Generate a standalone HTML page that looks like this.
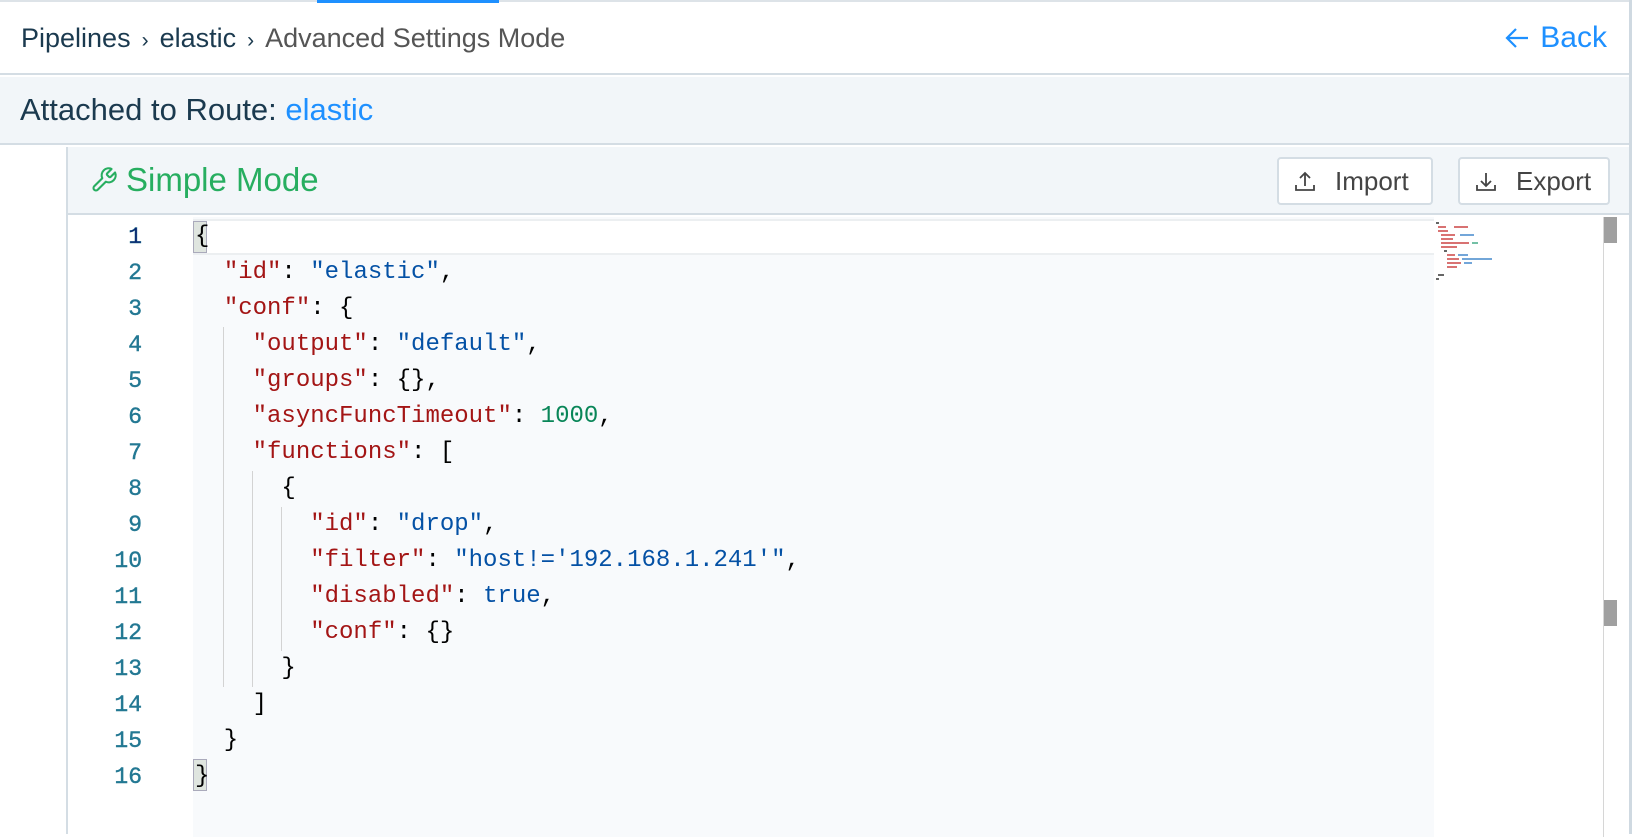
<!DOCTYPE html>
<html><head><meta charset="utf-8"><style>
*{margin:0;padding:0;box-sizing:border-box}
body{width:1632px;height:834px;overflow:hidden;background:#fff;font-family:"Liberation Sans",sans-serif;position:relative}
.topline{position:absolute;left:0;top:0;width:1632px;height:2px;background:#dde3e8}
.tab{position:absolute;left:317px;top:0;width:182px;height:3px;background:#1e90ff}
.rb{position:absolute;left:1629px;top:0;width:3px;height:834px;background:#cfd9e1}
.hdr{position:absolute;left:0;top:2px;width:1629px;height:73px;border-bottom:2px solid #d4dde4}
.crumb{position:absolute;left:21px;top:21px;font-size:27px;color:#1b3a4f}
.crumb .s{margin:0 11px;font-size:21px}
.crumb .g{color:#555}
.back{position:absolute;right:22px;top:19px;font-size:30px;color:#1e90ff;display:flex;align-items:center}
.bar{position:absolute;left:0;top:77px;width:1629px;height:68px;background:#f2f6f9;border-bottom:2px solid #d4dde4}
.bar span{position:absolute;left:20px;top:15px;font-size:31px;color:#1b3a4f}
.bar b{font-weight:normal;color:#1e90ff}
.panel{position:absolute;left:66px;top:147px;width:1563px;height:687px;border-left:2px solid #d4dde4}
.ph{position:absolute;left:0;top:0;width:100%;height:68px;background:#f2f6f9;border-bottom:2px solid #d4dde4}
.sm{position:absolute;left:22px;top:14px;font-size:33px;color:#27ae60;display:flex;align-items:center}
.btn{position:absolute;top:10px;height:48px;border:2px solid #d4dde4;border-radius:4px;background:#fff;font-size:26px;color:#444;display:flex;align-items:center;padding-left:14px}
.ed{position:absolute;left:0;top:70px;width:100%;height:620px}
.code{position:absolute;left:125px;top:0;width:1241px;height:100%;background:#f8fafc}
.ln{position:absolute;left:0;width:74px;text-align:right;font-family:"Liberation Mono",monospace;font-size:23px;color:#237893;line-height:36px;-webkit-text-stroke:0.4px #237893}
.l{position:absolute;left:127px;font-family:"Liberation Mono",monospace;font-size:24px;line-height:36px;white-space:pre;color:#000}
.k{color:#a31515}.v{color:#0451a5}.n{color:#098658}
.guide{position:absolute;width:1px;background:#d3d3d3}
</style></head><body>
<div class="topline"></div><div class="tab"></div>
<div class="hdr">
<div class="crumb">Pipelines<span class="s">›</span>elastic<span class="s">›</span><span class="g">Advanced Settings Mode</span></div>
<div class="back"><svg width="26" height="24" viewBox="0 0 26 24" style="margin-right:10px"><path d="M24 12H3M12 3L3 12L12 21" fill="none" stroke="#1e90ff" stroke-width="2.2"/></svg>Back</div>
</div>
<div class="bar"><span>Attached to Route: <b>elastic</b></span></div>
<div class="rb"></div>
<div class="panel">
<div class="ph">
<div class="sm"><svg width="28" height="28" viewBox="0 0 24 24" style="margin-right:8px"><path d="M14.7 6.3a1 1 0 0 0 0 1.4l1.6 1.6a1 1 0 0 0 1.4 0l3.77-3.77a6 6 0 0 1-7.94 7.94l-6.91 6.91a2.12 2.12 0 0 1-3-3l6.910-6.91a6 6 0 0 1 7.94-7.94l-3.76 3.76z" fill="none" stroke="#27ae60" stroke-width="1.8" stroke-linejoin="round"/></svg>Simple Mode</div>
<div class="btn" style="left:1209px;width:156px"><svg width="24" height="24" viewBox="0 0 24 24" style="margin-right:18px"><path d="M12 17V4M7 9l5-5 5 5M3 16v5h18v-5" fill="none" stroke="#444" stroke-width="1.8"/></svg>Import</div>
<div class="btn" style="left:1390px;width:152px"><svg width="24" height="24" viewBox="0 0 24 24" style="margin-right:18px"><path d="M12 4v13M7 12l5 5 5-5M3 16v5h18v-5" fill="none" stroke="#444" stroke-width="1.8"/></svg>Export</div>
</div>
<div class="ed">
<div class="code"></div>
<div style="position:absolute;left:125px;top:2px;width:1241px;height:36px;background:#fff;border-bottom:2px solid #eceff1;border-top:2px solid #eceff1"></div>
<div style="position:absolute;left:125px;top:4px;width:14px;height:32px;background:#dfe5df;border:1px solid #aab"></div>
<div style="position:absolute;left:125px;top:542px;width:14px;height:32px;background:#dfe5df;border:1px solid #aab"></div>
<div class="guide" style="left:155px;top:110px;height:360px"></div>
<div class="guide" style="left:184px;top:254px;height:216px"></div>
<div class="guide" style="left:213px;top:290px;height:144px"></div>
<div style="position:absolute;left:1535px;top:0;width:1px;height:620px;background:#d6d6d6"></div>
<div style="position:absolute;left:1536px;top:0;width:13px;height:26px;background:#a0a0a0"></div>
<div style="position:absolute;left:1536px;top:383px;width:13px;height:26px;background:#a0a0a0"></div>
<div class="ln" style="top:2px;color:#0b216f">1</div>
<div class="ln" style="top:38px">2</div><div class="ln" style="top:74px">3</div><div class="ln" style="top:110px">4</div><div class="ln" style="top:146px">5</div><div class="ln" style="top:182px">6</div><div class="ln" style="top:218px">7</div><div class="ln" style="top:254px">8</div><div class="ln" style="top:290px">9</div><div class="ln" style="top:326px">10</div><div class="ln" style="top:362px">11</div><div class="ln" style="top:398px">12</div><div class="ln" style="top:434px">13</div><div class="ln" style="top:470px">14</div><div class="ln" style="top:506px">15</div><div class="ln" style="top:542px">16</div>
<div class="l" style="top:2px">{</div>
<div class="l" style="top:38px">  <span class="k">"id"</span>: <span class="v">"elastic"</span>,</div>
<div class="l" style="top:74px">  <span class="k">"conf"</span>: {</div>
<div class="l" style="top:110px">    <span class="k">"output"</span>: <span class="v">"default"</span>,</div>
<div class="l" style="top:146px">    <span class="k">"groups"</span>: {},</div>
<div class="l" style="top:182px">    <span class="k">"asyncFuncTimeout"</span>: <span class="n">1000</span>,</div>
<div class="l" style="top:218px">    <span class="k">"functions"</span>: [</div>
<div class="l" style="top:254px">      {</div>
<div class="l" style="top:290px">        <span class="k">"id"</span>: <span class="v">"drop"</span>,</div>
<div class="l" style="top:326px">        <span class="k">"filter"</span>: <span class="v">"host!='192.168.1.241'"</span>,</div>
<div class="l" style="top:362px">        <span class="k">"disabled"</span>: <span class="v">true</span>,</div>
<div class="l" style="top:398px">        <span class="k">"conf"</span>: {}</div>
<div class="l" style="top:434px">      }</div>
<div class="l" style="top:470px">    ]</div>
<div class="l" style="top:506px">  }</div>
<div class="l" style="top:542px">}</div>
<svg style="position:absolute;left:1366px;top:2px" width="80" height="64" viewBox="0 0 80 64">
<g stroke-width="1.5">
<path d="M2 4h3" stroke="#333"/><path d="M4 8h8M20 8h14" stroke="#c44"/><path d="M4 12h10" stroke="#c44"/>
<path d="M7 16h14" stroke="#c44"/><path d="M26 16h14" stroke="#48c"/><path d="M7 20h12" stroke="#c44"/>
<path d="M7 24h28" stroke="#c44"/><path d="M38 24h6" stroke="#4a8"/><path d="M7 28h16" stroke="#c44"/>
<path d="M10 32h3" stroke="#333"/><path d="M13 36h8" stroke="#c44"/><path d="M24 36h10" stroke="#48c"/>
<path d="M13 40h12" stroke="#c44"/><path d="M28 40h30" stroke="#48c"/><path d="M13 44h14" stroke="#c44"/><path d="M30 44h8" stroke="#48c"/>
<path d="M13 48h10" stroke="#c44"/><path d="M4 56h6M2 60h3" stroke="#333"/></g></svg>
</div>
</div>
</body></html>
